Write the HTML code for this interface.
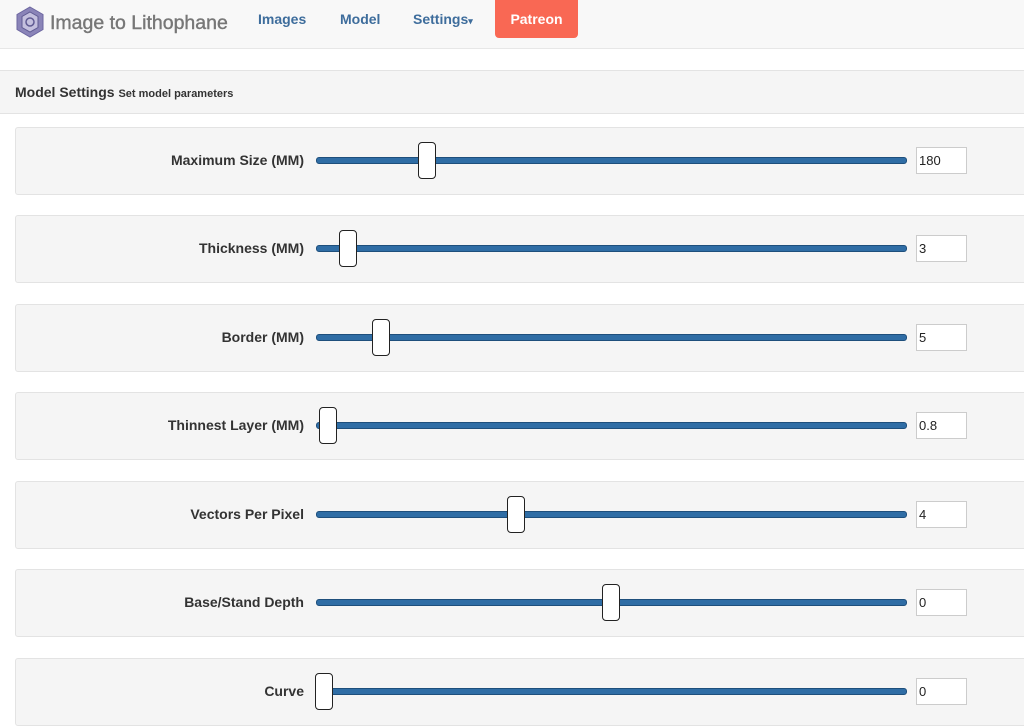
<!DOCTYPE html><html><head><style>
body{margin:0;width:1024px;height:714px;overflow:hidden;background:#fff;font-family:"Liberation Sans",Arial,sans-serif;position:relative}
.nav{position:absolute;left:0;top:0;width:1024px;height:48px;background:#f8f8f8;border-bottom:1px solid #e7e7e7}
.brand{position:absolute;left:50px;top:12px;font-size:19.5px;color:#777;-webkit-text-stroke:0.4px #777}
.link{position:absolute;top:11px;font-size:14px;font-weight:bold;color:#3e6d9c}
.pat{position:absolute;left:495px;top:0;width:83px;height:38px;background:#f96854;border-radius:0 0 4px 4px;color:#fff;font-weight:bold;font-size:14px;text-align:center;line-height:38px}
.hd{position:absolute;left:0;top:70px;width:1024px;height:42px;background:#f5f5f5;border-top:1px solid #e3e3e3;border-bottom:1px solid #e3e3e3}
.hd b{position:absolute;left:15px;top:13px;font-size:14px;color:#333}
.hd span{font-size:11px}
.row{position:absolute;left:15px;width:1020px;height:66px;background:#f5f5f5;border:1px solid #e3e3e3;border-radius:3px}
.lbl{position:absolute;right:732px;top:24px;font-size:14px;font-weight:bold;color:#333;white-space:nowrap}
.trk{position:absolute;left:300px;top:29px;width:591px;height:7px;background:#2f6da5;border:1px solid #1e4f7c;border-radius:3px;box-sizing:border-box}
.th{position:absolute;top:14px;width:18px;height:37px;background:#fff;border:1px solid #222;border-radius:4px;box-sizing:border-box}
.in{position:absolute;left:900px;top:19px;width:51px;height:27px;background:#fff;border:1px solid #ccc;box-sizing:border-box;font-size:13px;padding:5px 2px;color:#222}
</style></head><body>
<div class="nav">
<svg style="position:absolute;left:16px;top:6px" width="28" height="32" viewBox="0 0 28 32"><polygon points="14,1 27,8.5 27,23.5 14,31 1,23.5 1,8.5" fill="#8a84b8" stroke="#6c66a0"/><polygon points="14,6 22,10.5 22,21.5 14,26 6,21.5 6,10.5" fill="#c4c0de" stroke="#5f5a92"/><circle cx="14" cy="16" r="4" fill="none" stroke="#5f5a92" stroke-width="1.5"/></svg>
<div class="brand">Image to Lithophane</div>
<div class="link" style="left:258px">Images</div>
<div class="link" style="left:340px">Model</div>
<div class="link" style="left:413px">Settings<span style="font-size:9px">▾</span></div>
<div class="pat">Patreon</div>
</div>
<div class="hd"><b>Model Settings <span>Set model parameters</span></b></div>

<div class="row" style="top:127px"><div class="lbl">Maximum Size (MM)</div><div class="trk"></div><div class="th" style="left:402px"></div><div class="in">180</div></div>
<div class="row" style="top:215px"><div class="lbl">Thickness (MM)</div><div class="trk"></div><div class="th" style="left:323px"></div><div class="in">3</div></div>
<div class="row" style="top:304px"><div class="lbl">Border (MM)</div><div class="trk"></div><div class="th" style="left:356px"></div><div class="in">5</div></div>
<div class="row" style="top:392px"><div class="lbl">Thinnest Layer (MM)</div><div class="trk"></div><div class="th" style="left:303px"></div><div class="in">0.8</div></div>
<div class="row" style="top:481px"><div class="lbl">Vectors Per Pixel</div><div class="trk"></div><div class="th" style="left:491px"></div><div class="in">4</div></div>
<div class="row" style="top:569px"><div class="lbl">Base/Stand Depth</div><div class="trk"></div><div class="th" style="left:586px"></div><div class="in">0</div></div>
<div class="row" style="top:658px"><div class="lbl">Curve</div><div class="trk"></div><div class="th" style="left:299px"></div><div class="in">0</div></div>
</body></html>
